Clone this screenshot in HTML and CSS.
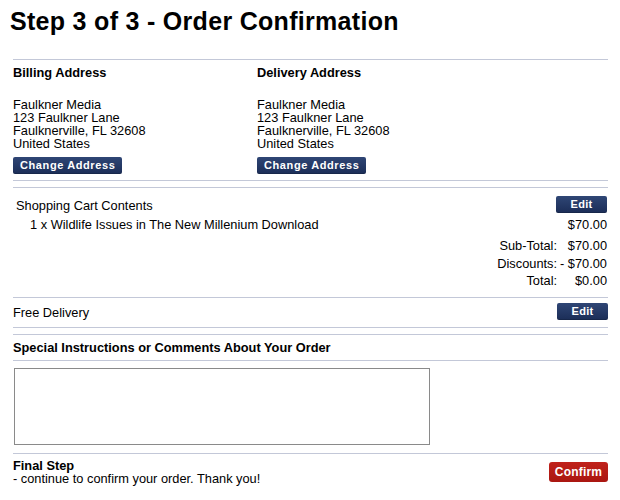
FILE: index.html
```html
<!DOCTYPE html>
<html lang="en">
<head>
<meta charset="utf-8">
<title>Step 3 of 3 - Order Confirmation</title>
<link rel="stylesheet" href="styles.css">
</head>
<body>
<h1 class="title">Step 3 of 3 - Order Confirmation</h1>
<div class="content">
  <section class="addresses">
    <div class="address">
      <div class="label">Billing Address</div>
      <div class="lines">Faulkner Media<br>123 Faulkner Lane<br>Faulknerville, FL 32608<br>United States</div>
      <button class="btn btn-navy btn-wide" type="button">Change Address</button>
    </div>
    <div class="address">
      <div class="label">Delivery Address</div>
      <div class="lines">Faulkner Media<br>123 Faulkner Lane<br>Faulknerville, FL 32608<br>United States</div>
      <button class="btn btn-navy btn-wide" type="button">Change Address</button>
    </div>
  </section>

  <section class="cart">
    <div class="row">
      <span class="row-text">Shopping Cart Contents</span>
      <button class="btn btn-navy btn-edit" type="button">Edit</button>
    </div>
    <div class="row item">
      <span>1 x Wildlife Issues in The New Millenium Download</span>
      <span>$70.00</span>
    </div>
    <div class="totals">
      <span>Sub-Total:</span><span>$70.00</span>
      <span>Discounts:</span><span>- $70.00</span>
      <span>Total:</span><span>$0.00</span>
    </div>
  </section>

  <section class="delivery">
    <div class="row">
      <span class="row-text">Free Delivery</span>
      <button class="btn btn-navy btn-edit" type="button">Edit</button>
    </div>
  </section>

  <section class="special">
    <div class="label">Special Instructions or Comments About Your Order</div>
  </section>
  <textarea class="comments" aria-label="Special instructions"></textarea>

  <section class="final">
    <div>
      <div class="label">Final Step</div>
      <div>- continue to confirm your order. Thank you!</div>
    </div>
    <button class="btn btn-red" type="button">Confirm</button>
  </section>
</div>
</body>
</html>
```

FILE: styles.css
```css
body {
  margin: 0;
  background: #ffffff;
  color: #000000;
  font-family: "Liberation Sans", Arial, Helvetica, sans-serif;
  font-size: 12.8px;
  line-height: 13px;
}

.title {
  margin: 6px 0 23px 10px;
  font-size: 25px;
  line-height: 30px;
  letter-spacing: 0.3px;
  font-weight: bold;
}

.content {
  margin: 0 12px 0 13px;
}

.label {
  font-weight: bold;
}

.addresses {
  display: grid;
  grid-template-columns: 244px 1fr;
  padding: 6px 0 6px;
  border-top: 1px solid #c3c8d8;
  border-bottom: 1px solid #c3c8d8;
}

.address .lines {
  margin-top: 19px;
}

.address .btn {
  margin-top: 7px;
}

.btn {
  display: inline-block;
  border: none;
  margin: 0;
  border-radius: 2px;
  color: #ffffff;
  font-family: "Liberation Sans", Arial, Helvetica, sans-serif;
  font-size: 11px;
  font-weight: bold;
  cursor: pointer;
}

.btn-navy {
  height: 17px;
  line-height: 17px;
  background: linear-gradient(#2f4675, #1b2d57);
  box-shadow: inset 0 -1px 0 rgba(0, 0, 0, 0.15);
}

.btn-wide {
  padding: 0 7px;
  letter-spacing: 0.6px;
}

.btn-edit {
  width: 51px;
  padding: 0;
  letter-spacing: 0.3px;
}

.btn-red {
  width: 59px;
  height: 20px;
  line-height: 20px;
  padding: 0;
  font-size: 12px;
  letter-spacing: 0.2px;
  background: linear-gradient(#c0221b, #aa1711);
  border-radius: 3px;
}

.row {
  display: flex;
  justify-content: space-between;
  align-items: center;
}

.row-text {
  padding-top: 2px;
}

.cart {
  margin-top: 6px;
  padding: 8px 1px 7px 3px;
  border-top: 1px solid #c3c8d8;
  border-bottom: 1px solid #c3c8d8;
}

.cart .item {
  margin-top: 5px;
  padding-left: 14px;
}

.totals {
  margin-top: 6px;
  display: grid;
  grid-template-columns: auto auto;
  justify-content: end;
  column-gap: 3px;
  line-height: 17.5px;
  text-align: right;
}

.delivery {
  padding: 5px 0 7px;
  border-bottom: 1px solid #c3c8d8;
}

.special {
  margin-top: 6px;
  padding: 6px 0 6px;
  border-top: 1px solid #c3c8d8;
  border-bottom: 1px solid #c3c8d8;
}

.comments {
  display: block;
  box-sizing: border-box;
  width: 416px;
  height: 77px;
  margin: 7px 0 0 1px;
  padding: 2px;
  border: 1px solid #8a8a8a;
  resize: none;
  font-family: "Liberation Sans", Arial, sans-serif;
  font-size: 12.8px;
}

.final {
  margin-top: 8px;
  padding: 5px 0 3px;
  border-top: 1px solid #c3c8d8;
  display: flex;
  justify-content: space-between;
  align-items: center;
}
```
